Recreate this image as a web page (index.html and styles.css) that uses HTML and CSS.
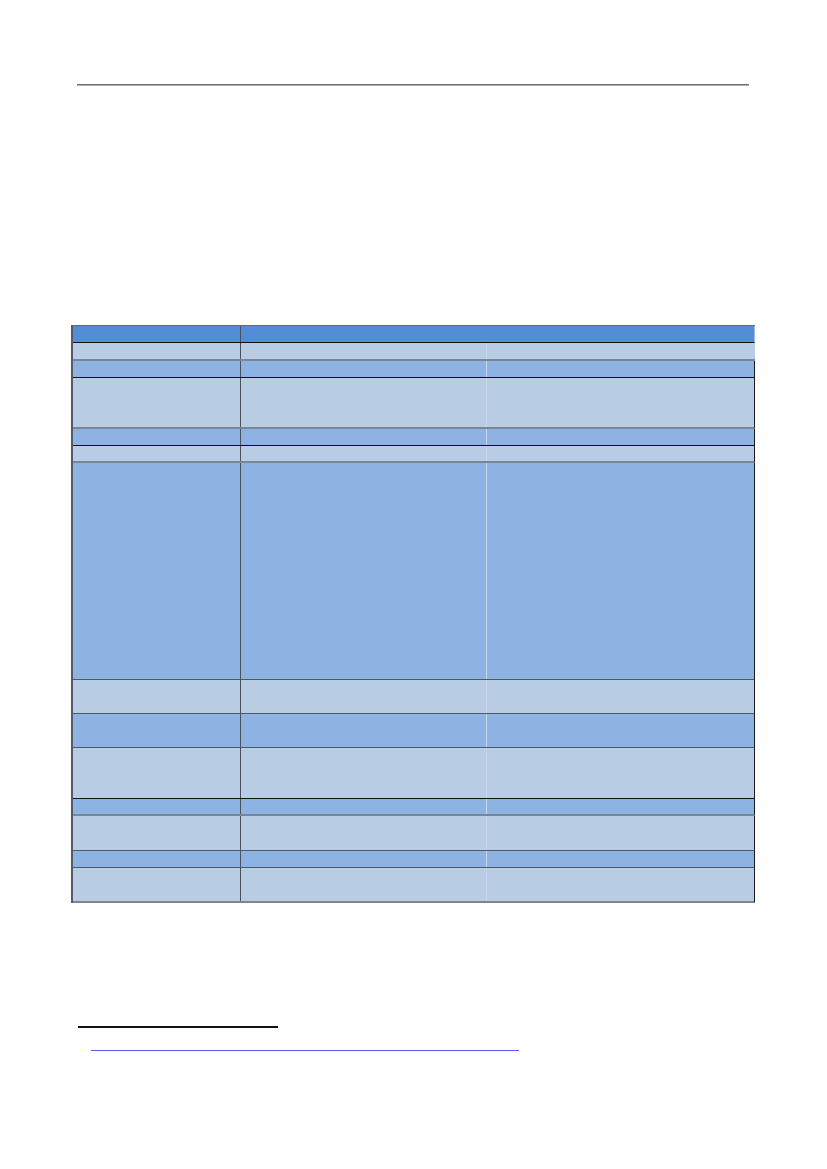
FILE: index.html
```html
<!DOCTYPE html>
<html lang="en">
<head>
<meta charset="utf-8">
<title>Document page</title>
<link rel="stylesheet" href="styles.css">
</head>
<body>
<div class="page">
  <div class="header-rule"></div>
  <div class="table">
    <div class="row head b-black"><div class="cell c1"></div><div class="cell c23"></div></div>
    <div class="row light h18 b-gray"><div class="cell c1"></div><div class="cell c2"></div><div class="cell c3"></div></div>
    <div class="row medium h17 b-black rb"><div class="cell c1"></div><div class="cell c2"></div><div class="cell c3"></div></div>
    <div class="row light h51 b-gray rb"><div class="cell c1"></div><div class="cell c2"></div><div class="cell c3"></div></div>
    <div class="row medium h17 b-black rb"><div class="cell c1"></div><div class="cell c2"></div><div class="cell c3"></div></div>
    <div class="row light h17 b-gray rb"><div class="cell c1"></div><div class="cell c2"></div><div class="cell c3"></div></div>
    <div class="row medium h217 b-dark rb"><div class="cell c1"></div><div class="cell c2"></div><div class="cell c3"></div></div>
    <div class="row light h34 b-dark rb"><div class="cell c1"></div><div class="cell c2"></div><div class="cell c3"></div></div>
    <div class="row medium h34 b-dark rb"><div class="cell c1"></div><div class="cell c2"></div><div class="cell c3"></div></div>
    <div class="row light h51 b-black rb"><div class="cell c1"></div><div class="cell c2"></div><div class="cell c3"></div></div>
    <div class="row medium h17 b-gray rb"><div class="cell c1"></div><div class="cell c2"></div><div class="cell c3"></div></div>
    <div class="row light h35 b-dark rb"><div class="cell c1"></div><div class="cell c2"></div><div class="cell c3"></div></div>
    <div class="row medium h17 b-dark rb"><div class="cell c1"></div><div class="cell c2"></div><div class="cell c3"></div></div>
    <div class="row light h35 b-gray rb"><div class="cell c1"></div><div class="cell c2"></div><div class="cell c3"></div></div>
  </div>
  <div class="footnotes">
    <div class="footnote-rule"></div>
    <div class="footnote"><span class="footnote-link"></span></div>
  </div>
</div>
</body>
</html>
```

FILE: styles.css
```css
html, body {
  margin: 0;
  padding: 0;
  background: #ffffff;
  font-family: "Liberation Serif", serif;
}

.page {
  width: 827px;
  height: 1169px;
  padding-top: 84px;
  box-sizing: border-box;
}

.header-rule {
  margin-left: 77px;
  width: 672px;
  height: 2px;
  background: #6f6f6f;
  border-bottom: 1px solid #b0b0b0;
  box-sizing: border-box;
}

.table {
  margin-top: 239px;
  margin-left: 71px;
  width: 684px;
  display: flex;
  flex-direction: column;
  border-left: 2px solid #555b66;
  border-top: 1px solid #666a70;
  box-sizing: border-box;
}

.row {
  display: grid;
  grid-template-columns: 168px 246px 1fr;
  box-sizing: border-box;
}

.row.head {
  grid-template-columns: 168px 1fr;
  height: 17px;
  background: #538dd5;
  border-right: 1px solid #9dbbe6;
}

.row.light { background: #b8cce4; }
.row.medium { background: #8db3e2; }

.rb { border-right: 1.5px solid #1a1a1a; }

.h17 { height: 17px; }
.h18 { height: 18px; }
.h34 { height: 34px; }
.h35 { height: 35px; }
.h51 { height: 51px; }
.h217 { height: 217px; }

.b-black { border-bottom: 1.5px solid #111111; }
.b-gray { border-bottom: 2px solid #7b8694; }
.b-dark { border-bottom: 1.5px solid #4d5866; }

.cell { box-sizing: border-box; }
.c1 { border-right: 1.5px solid #4a505c; }
.c2 { border-right: 1px solid #c9d7ea; }

.footnotes {
  margin-top: 123px;
}

.footnote-rule {
  margin-left: 78px;
  width: 200px;
  height: 1.5px;
  background: #111111;
}

.footnote {
  margin-top: 22px;
  padding-left: 91px;
  height: 2px;
}

.footnote-link {
  display: block;
  width: 428px;
  height: 1.5px;
  background: #5b5ef2;
}
```
